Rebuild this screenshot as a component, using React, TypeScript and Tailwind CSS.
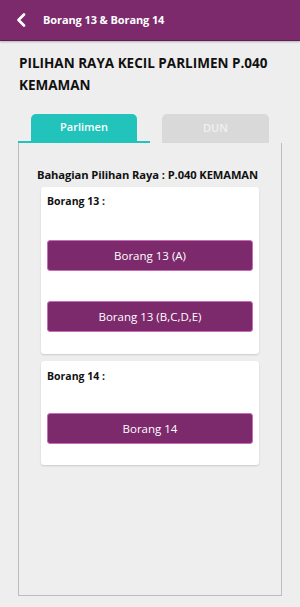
import React from "react";

const font = { fontFamily: '"Open Sans", "Noto Sans", sans-serif' };

function PurpleButton({ label }: { label: string }) {
  return (
    <button className="w-full h-[31px] rounded-[3px] bg-[#7c2a6c] border border-[#c86bb8] text-white text-[11.5px] font-medium flex items-center justify-center">
      {label}
    </button>
  );
}

export default function App() {
  return (
    <div className="w-[300px] h-[607px] bg-[#eeeeee] flex flex-col overflow-hidden" style={font}>
      <div className="h-[41px] bg-[#7c2a6c] border-b border-[#5e1e51] shadow-[0_1px_2px_rgba(0,0,0,0.25)] flex items-center shrink-0">
        <svg width="12" height="14" viewBox="0 0 12 14" className="ml-[15px]">
          <path d="M9 1.5 L3.5 7 L9 12.5" fill="none" stroke="white" strokeWidth="2.6" strokeLinecap="round" strokeLinejoin="round" />
        </svg>
        <span className="ml-[16px] text-white text-[11px] font-bold tracking-[-0.1px]">Borang 13 &amp; Borang 14</span>
      </div>
      <div className="px-[19px] pt-[11px] text-[13.5px] font-bold leading-[22px] text-[#111]">
        PILIHAN RAYA KECIL PARLIMEN P.040<br />KEMAMAN
      </div>
      <div className="mx-[18px] mt-[18px] flex flex-col">
        <div className="flex h-[29px]">
          <div className="w-[132px] border-b-2 border-[#22c3bb] flex">
            <div className="ml-[13px] w-[106px] bg-[#22c3bb] rounded-t-[5px] flex items-center justify-center text-white text-[11px] font-semibold">
              Parlimen
            </div>
          </div>
          <div className="ml-[12px] w-[107px] bg-[#d9d9d9] rounded-t-[5px] flex items-center justify-center text-[#f0f0f0] text-[11px] font-semibold">
            DUN
          </div>
        </div>
        <div className="h-[453px] border border-t-0 border-[#bdbdbd] border-r-[1.5px] border-b-[1.5px] px-[18px] pt-[24px]">
          <div className="text-[11.2px] font-bold text-[#111] leading-[15px] tracking-[-0.1px] whitespace-nowrap">
            Bahagian Pilihan Raya : P.040 KEMAMAN
          </div>
          <div className="ml-[4px] mr-[4px] mt-[5px] bg-white rounded-[3px] shadow-[0_1px_2px_rgba(0,0,0,0.15)] px-[6px] pt-[7px] pb-[22px] w-[218px]">
            <div className="text-[10.5px] font-bold text-[#111] leading-[14px]">Borang 13 :</div>
            <div className="mt-[32px]">
              <PurpleButton label="Borang 13 (A)" />
            </div>
            <div className="mt-[30px]">
              <PurpleButton label="Borang 13 (B,C,D,E)" />
            </div>
          </div>
          <div className="ml-[4px] mt-[7px] bg-white rounded-[3px] shadow-[0_1px_2px_rgba(0,0,0,0.15)] px-[6px] pt-[8px] pb-[21px] w-[218px]">
            <div className="text-[10.5px] font-bold text-[#111] leading-[14px]">Borang 14 :</div>
            <div className="mt-[30px]">
              <PurpleButton label="Borang 14" />
            </div>
          </div>
        </div>
      </div>
    </div>
  );
}
